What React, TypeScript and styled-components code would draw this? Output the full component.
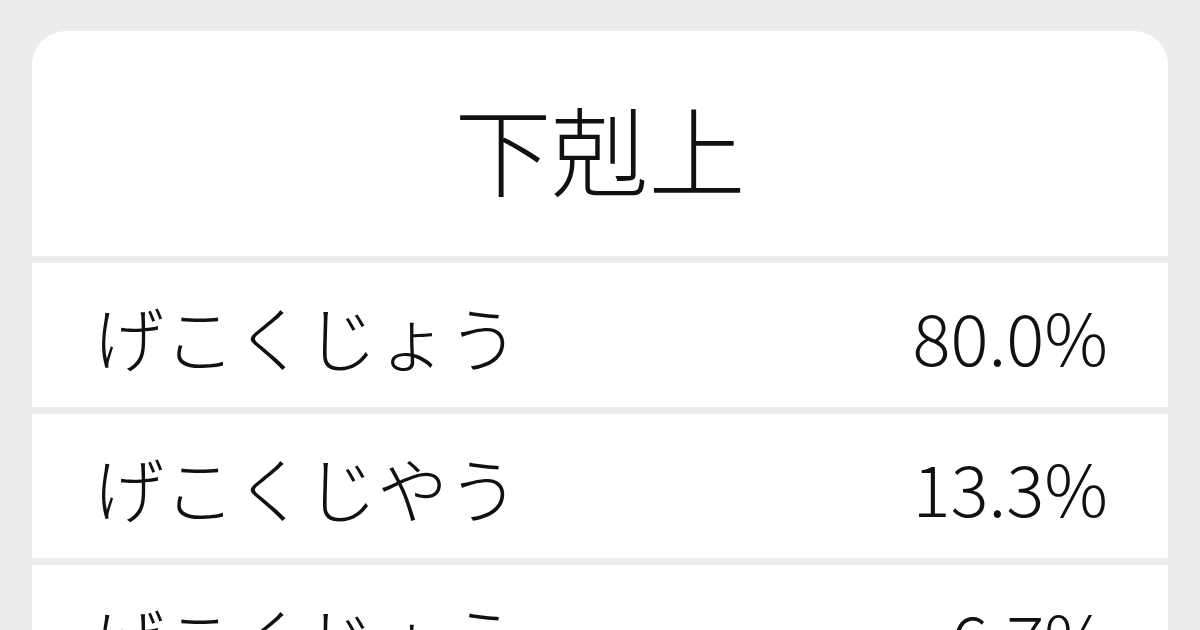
import React from 'react';
import styled, { createGlobalStyle } from 'styled-components';

const readings = [
  { kana: 'げこくじょう', rate: '80.0%' },
  { kana: 'げこくじやう', rate: '13.3%' },
  { kana: 'げこくじょう', rate: '6.7%' },
];

const GlobalStyle = createGlobalStyle`
  html, body {
    margin: 0;
    padding: 0;
    background: #ececec;
  }
  body {
    font-family: "Noto Sans CJK JP", "Noto Sans", sans-serif;
    color: #111;
  }
`;

const Page = styled.div`
  width: 1200px;
  height: 630px;
  overflow: hidden;
  padding: 31px 32px 0;
  box-sizing: border-box;
`;

const Card = styled.div`
  display: flex;
  flex-direction: column;
  gap: 7px;
  background: #ececec;
  border-radius: 34px 34px 0 0;
  overflow: hidden;
`;

const Heading = styled.div`
  height: 225px;
  display: flex;
  align-items: center;
  justify-content: center;
  padding-top: 6px;
  box-sizing: border-box;
  background: #fff;
  font-size: 97px;
  font-weight: 300;
  line-height: 1;
`;

const Row = styled.div`
  height: 144px;
  display: flex;
  align-items: center;
  justify-content: space-between;
  padding: 0 60px 0 61px;
  background: #fff;
  font-size: 71px;
  font-weight: 300;
  line-height: 1;
`;

const Kana = styled.span``;

const Rate = styled.span``;

export default function App() {
  return (
    <>
      <GlobalStyle />
      <Page>
        <Card>
          <Heading>下剋上</Heading>
          {readings.map((r, i) => (
            <Row key={i}>
              <Kana>{r.kana}</Kana>
              <Rate>{r.rate}</Rate>
            </Row>
          ))}
        </Card>
      </Page>
    </>
  );
}
